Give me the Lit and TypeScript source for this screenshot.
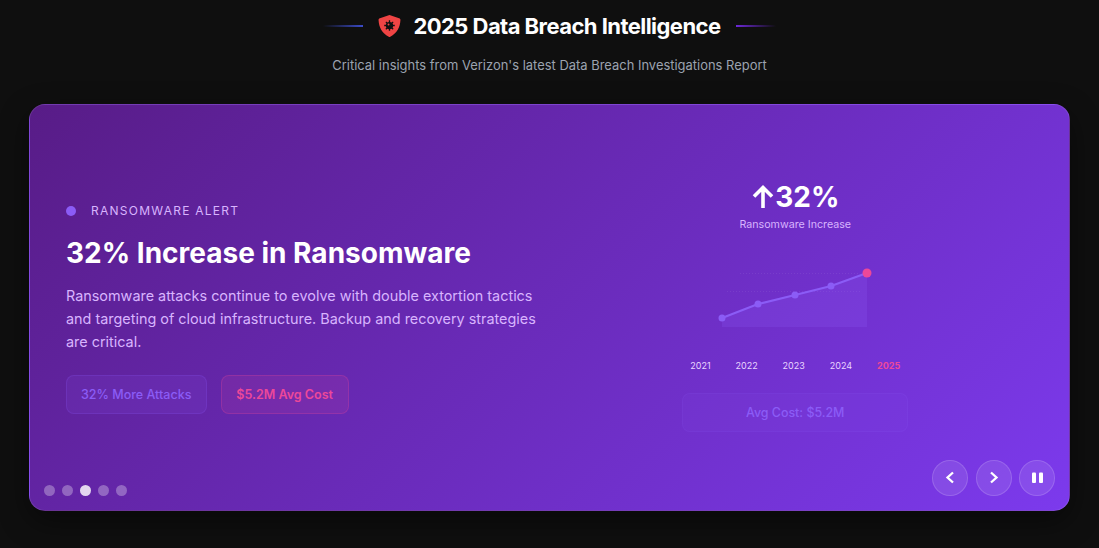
import { LitElement, html, css, svg } from "lit";
import { customElement } from "lit/decorators.js";

@customElement("app-root")
export class AppRoot extends LitElement {
  static styles = css`
    :host { display: block; height: 548px; overflow: hidden; background: #0f0f0f; font-family: Inter, "Liberation Sans", sans-serif; color: #fff; }
    .header { display: flex; flex-direction: column; align-items: center; padding-top: 11px; height: 104px; box-sizing: border-box; }
    .title-row { display: flex; align-items: center; height: 30px; }
    .line { width: 40px; height: 2px; }
    .line.l { background: linear-gradient(90deg, transparent, #3b4bc8); margin-right: 15px; }
    .line.r { background: linear-gradient(90deg, #6d28d9, transparent); margin-left: 15px; }
    .shield { width: 23px; height: 24px; margin-right: 12px; }
    h1 { margin: 0; font-size: 22px; line-height: 30px; font-weight: 700; letter-spacing: -0.55px; }
    .sub { margin: 14px 0 0; font-size: 12.95px; line-height: 20px; color: #9ca3af; }
    .card { position: relative; margin: 0 29px; height: 407px; box-sizing: border-box; border-radius: 16px; border: 1px solid rgba(255,255,255,.1); background: linear-gradient(135deg, #581c87, #7c3aed); box-shadow: 0 10px 30px rgba(0,0,0,.45); display: grid; grid-template-columns: 1fr 1fr; column-gap: 16px; padding: 0 36px; align-items: center; }
    .left { padding-top: 2px; }
    .tag { display: flex; align-items: center; font-size: 12px; line-height: 16px; letter-spacing: 1.25px; color: #d8b4fe; }
    .tag i { width: 10px; height: 10px; border-radius: 50%; background: #8b5cf6; margin-right: 15px; }
    h2 { margin: 14px 0 0; font-size: 28px; line-height: 40px; font-weight: 700; }
    p.desc { margin: 11px 0 0; font-size: 14.4px; line-height: 23px; color: #d8b4fe; }
    .chips { display: flex; gap: 14px; margin-top: 22px; }
    .chip { height: 39px; box-sizing: border-box; padding: 0 15px 0 14px; border-radius: 8px; display: flex; align-items: center; font-size: 12.5px; font-weight: 500; }
    .chip.a { color: #8b5cf6; background: rgba(139,92,246,.12); border: 1px solid rgba(139,92,246,.2); }
    .chip.b { color: #ec4899; background: rgba(236,72,153,.12); border: 1px solid rgba(236,72,153,.25); font-weight: 600; }
    .right { display: flex; flex-direction: column; align-items: center; padding-bottom: 4px; }
    .big { display: flex; align-items: center; font-size: 28px; line-height: 36px; font-weight: 700; }
    .big svg { width: 24px; height: 28px; }
    .lbl { font-size: 10.7px; line-height: 16px; color: #d8b4fe; margin-top: 2px; }
    .chart { width: 226px; height: 60px; margin-top: 35px; display: block; }
    .years { display: flex; width: 210px; justify-content: space-between; margin-top: 31px; font-size: 9px; line-height: 14px; color: #e9d5ff; }
    .years b { color: #ec4899; font-weight: 700; }
    .stat { width: 226px; height: 39px; margin-top: 20px; box-sizing: border-box; display: flex; align-items: center; justify-content: center; border-radius: 8px; background: rgba(139,92,246,.08); border: 1px solid rgba(139,92,246,.12); color: #8b5cf6; font-size: 12.4px; font-weight: 500; }
    .dots { position: absolute; left: 14px; bottom: 14px; display: flex; gap: 7px; }
    .dots i { width: 11px; height: 11px; border-radius: 50%; background: rgba(255,255,255,.3); }
    .dots i.on { background: rgba(255,255,255,.82); }
    .ctrls { position: absolute; right: 14px; bottom: 14px; display: flex; gap: 7.5px; }
    .ctrl { width: 36px; height: 36px; box-sizing: border-box; border-radius: 50%; background: rgba(255,255,255,.1); border: 1px solid rgba(255,255,255,.15); display: flex; align-items: center; justify-content: center; }
    .ctrl svg { width: 14px; height: 14px; }
  `;

  render() {
    const pts: [number, number][] = [[40, 50], [76, 36], [113, 27], [149, 18], [185, 5]];
    const chevron = (d: string) => html`<svg viewBox="0 0 14 14" fill="none" stroke="#fff" stroke-width="2.300"><path d=${d}></path></svg>`;
    return html`
      <div class="header">
        <div class="title-row">
          <div class="line l"></div>
          <svg class="shield" viewBox="0 0 24 24">
            <path fill="#ef4444" d="M12 .5 L22 4 C23 4.300 23.500 5 23.400 6 C23 13 20 19.500 12.800 23.200 C12.300 23.500 11.700 23.500 11.200 23.200 C4 19.500 1 13 .6 6 C.5 5 1 4.300 2 4 Z"></path>
            <circle cx="12" cy="11.500" r="3.800" fill="#111"></circle>
            <g stroke="#111" stroke-width="1.400">
              <path d="M12 6V17M6.500 11.500H17.500M8.200 7.700L15.800 15.300M15.800 7.700L8.200 15.300"></path>
            </g>
            <circle cx="11" cy="10.500" r="1" fill="#ef4444"></circle>
          </svg>
          <h1>2025 Data Breach Intelligence</h1>
          <div class="line r"></div>
        </div>
        <div class="sub">Critical insights from Verizon's latest Data Breach Investigations Report</div>
      </div>
      <div class="card">
        <div class="left">
          <div class="tag"><i></i>RANSOMWARE ALERT</div>
          <h2>32% Increase in Ransomware</h2>
          <p class="desc">Ransomware attacks continue to evolve with double extortion tactics and targeting of cloud infrastructure. Backup and recovery strategies are critical.</p>
          <div class="chips">
            <div class="chip a">32% More Attacks</div>
            <div class="chip b">$5.2M Avg Cost</div>
          </div>
        </div>
        <div class="right">
          <div class="big">
            <svg viewBox="0 0 24 28" fill="none" stroke="#fff" stroke-width="3.600"><path d="M12 25V5M3 13.500L12 4.500L21 13.500"></path></svg>
            32%
          </div>
          <div class="lbl">Ransomware Increase</div>
          <svg class="chart" viewBox="0 0 226 60">
            ${svg`<path d="M58 5.500H178M45 23.500H178" stroke="rgba(255,255,255,.07)" stroke-width="1" stroke-dasharray="1 2"></path>
            <polygon fill="rgba(139,92,246,.22)" points="40,50 76,36 113,27 149,18 185,5 185,59 40,59"></polygon>
            <polyline fill="none" stroke="#8b5cf6" stroke-width="2.200" points=${pts.map((p) => p.join(",")).join(" ")}></polyline>
            ${pts.map((p, i) => i < 4 ? svg`<circle cx=${p[0]} cy=${p[1]} r="3.500" fill="#8b5cf6"></circle>` : svg`<circle cx=${p[0]} cy=${p[1]} r="4.500" fill="#ec4899"></circle>`)}`}
          </svg>
          <div class="years"><span>2021</span><span>2022</span><span>2023</span><span>2024</span><b>2025</b></div>
          <div class="stat">Avg Cost: $5.2M</div>
        </div>
        <div class="dots"><i></i><i></i><i class="on"></i><i></i><i></i></div>
        <div class="ctrls">
          <div class="ctrl">${chevron("M10 1.500L4.500 6.500L10 11.500")}</div>
          <div class="ctrl">${chevron("M4 1.500L9.500 6.500L4 11.500")}</div>
          <div class="ctrl"><svg viewBox="0 0 14 14" fill="#fff"><rect x="2" y="1.500" width="4" height="10.500" rx="1"></rect><rect x="9" y="1.500" width="4" height="10.500" rx="1"></rect></svg></div>
        </div>
      </div>
    `;
  }
}
